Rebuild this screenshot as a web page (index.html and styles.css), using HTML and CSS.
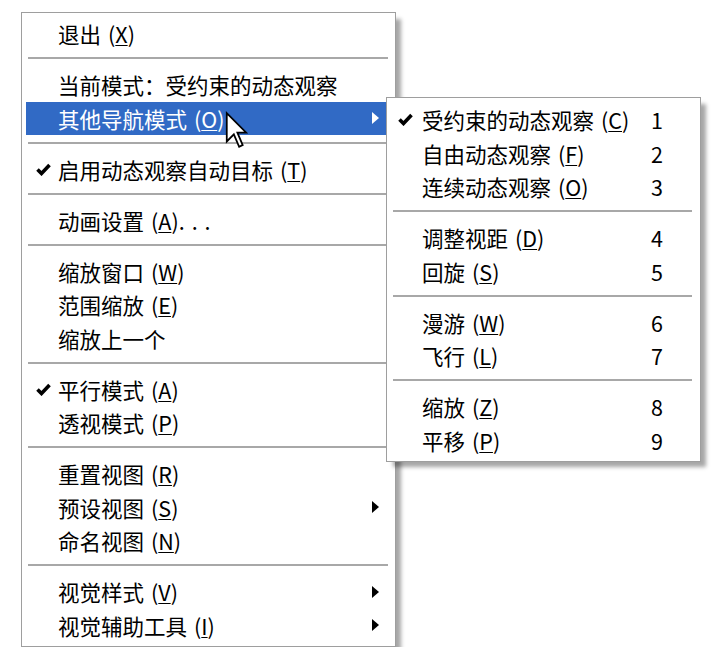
FILE: index.html
```html
<!DOCTYPE html>
<html>
    <head>
        <meta charset="utf-8">
        <link rel="stylesheet" href="styles.css">
    </head>
    <body>
        <div class="desk">
            <div class="menu">
                <div class="item"><span class="mark"></span><span class="label">退出<span class="key">(<u>X</u>)</span></span></div>
                <div class="sep"></div>
                <div class="item"><span class="mark"></span><span class="label">当前模式：受约束的动态观察</span></div>
                <div class="item hot"><span class="mark"></span><span class="label">其他导航模式<span class="key">(<u>O</u>)</span></span><span class="arrow"></span></div>
                <div class="sep"></div>
                <div class="item"><span class="mark"><svg class="tick" viewBox="0 0 15 13" width="15" height="13"><polyline points="1.5,6.5 5.5,10.5 13.5,2" /></svg></span><span class="label">启用动态观察自动目标<span class="key">(<u>T</u>)</span></span></div>
                <div class="sep"></div>
                <div class="item"><span class="mark"></span><span class="label">动画设置<span class="key">(<u>A</u>)</span><span class="dots">...</span></span></div>
                <div class="sep"></div>
                <div class="item"><span class="mark"></span><span class="label">缩放窗口<span class="key">(<u>W</u>)</span></span></div>
                <div class="item"><span class="mark"></span><span class="label">范围缩放<span class="key">(<u>E</u>)</span></span></div>
                <div class="item"><span class="mark"></span><span class="label">缩放上一个</span></div>
                <div class="sep"></div>
                <div class="item"><span class="mark"><svg class="tick" viewBox="0 0 15 13" width="15" height="13"><polyline points="1.5,6.5 5.5,10.5 13.5,2" /></svg></span><span class="label">平行模式<span class="key">(<u>A</u>)</span></span></div>
                <div class="item"><span class="mark"></span><span class="label">透视模式<span class="key">(<u>P</u>)</span></span></div>
                <div class="sep"></div>
                <div class="item"><span class="mark"></span><span class="label">重置视图<span class="key">(<u>R</u>)</span></span></div>
                <div class="item"><span class="mark"></span><span class="label">预设视图<span class="key">(<u>S</u>)</span></span><span class="arrow"></span></div>
                <div class="item"><span class="mark"></span><span class="label">命名视图<span class="key">(<u>N</u>)</span></span></div>
                <div class="sep"></div>
                <div class="item"><span class="mark"></span><span class="label">视觉样式<span class="key">(<u>V</u>)</span></span><span class="arrow"></span></div>
                <div class="item"><span class="mark"></span><span class="label">视觉辅助工具<span class="key">(<u>I</u>)</span></span><span class="arrow"></span></div>

                <!-- submenu of 其他导航模式 -->
                <div class="menu sub">
                    <div class="item"><span class="mark"><svg class="tick" viewBox="0 0 15 13" width="15" height="13"><polyline points="1.5,6.5 5.5,10.5 13.5,2" /></svg></span><span class="label">受约束的动态观察<span class="key">(<u>C</u>)</span></span><span class="short">1</span></div>
                    <div class="item"><span class="mark"></span><span class="label">自由动态观察<span class="key">(<u>F</u>)</span></span><span class="short">2</span></div>
                    <div class="item"><span class="mark"></span><span class="label">连续动态观察<span class="key">(<u>O</u>)</span></span><span class="short">3</span></div>
                    <div class="sep"></div>
                    <div class="item"><span class="mark"></span><span class="label">调整视距<span class="key">(<u>D</u>)</span></span><span class="short">4</span></div>
                    <div class="item"><span class="mark"></span><span class="label">回旋<span class="key">(<u>S</u>)</span></span><span class="short">5</span></div>
                    <div class="sep"></div>
                    <div class="item"><span class="mark"></span><span class="label">漫游<span class="key">(<u>W</u>)</span></span><span class="short">6</span></div>
                    <div class="item"><span class="mark"></span><span class="label">飞行<span class="key">(<u>L</u>)</span></span><span class="short">7</span></div>
                    <div class="sep"></div>
                    <div class="item"><span class="mark"></span><span class="label">缩放<span class="key">(<u>Z</u>)</span></span><span class="short">8</span></div>
                    <div class="item"><span class="mark"></span><span class="label">平移<span class="key">(<u>P</u>)</span></span><span class="short">9</span></div>
                </div>
            </div>
        </div>

        <!-- mouse pointer -->
        <svg class="cursor" viewBox="0 0 13 21" width="23" height="40"><path d="M1 1 L1 17 L5 13 L8 20 L10 19 L7 12 L12 12 Z" /></svg>
    </body>
</html>
```
FILE: styles.css
```css
html, body { margin: 0; padding: 0; background-color: #fff; }
body {
    position: relative;
    font-family: "Noto Sans CJK SC", sans-serif;
    font-size: 21.5px;
    color: #000;
}
.desk { padding: 12px 0 0 21px; }

.menu {
    position: relative;
    width: 375px;
    box-sizing: border-box;
    border: 1px solid #9e9e9e;
    background-color: #fff;
    padding: 4px;
    box-shadow: 6px 6px 4px -1px rgba(0, 0, 0, 0.35);
}
.menu.sub {
    position: absolute;
    left: 364px;
    top: 84px;
    width: 315px;
    padding: 5px 5px 4px 4px;
}

.item {
    display: flex;
    align-items: center;
    height: 33.5px;
    line-height: 33.5px;
    white-space: nowrap;
}
.item.hot { background-color: #316ac5; color: #fff; }

.mark {
    width: 32px;
    height: 100%;
    padding-left: 10px;
    box-sizing: border-box;
    display: flex;
    align-items: center;
    flex-shrink: 0;
}
.sub .mark { width: 31px; padding-left: 7px; }
.tick polyline { fill: none; stroke: #000; stroke-width: 3.6; }

.label { flex: 1; }
.key { margin-left: 7px; }
.key u { text-underline-offset: 2px; text-decoration-thickness: 1px; }
.dots { letter-spacing: 7px; }

.short { width: 44px; flex-shrink: 0; }

.arrow {
    width: 0;
    height: 0;
    border-left: 7px solid #000;
    border-top: 6px solid transparent;
    border-bottom: 6px solid transparent;
    margin-right: 12px;
}
.item.hot .arrow { border-left-color: #fff; }

.sep {
    height: 2px;
    margin: 6.5px 3px 9px 2px;
    background-color: #a8a8a8;
}

.cursor {
    position: absolute;
    left: 225px;
    top: 110px;
}
.cursor path { fill: #fff; stroke: #000; stroke-width: 1; stroke-linejoin: miter; }
```
